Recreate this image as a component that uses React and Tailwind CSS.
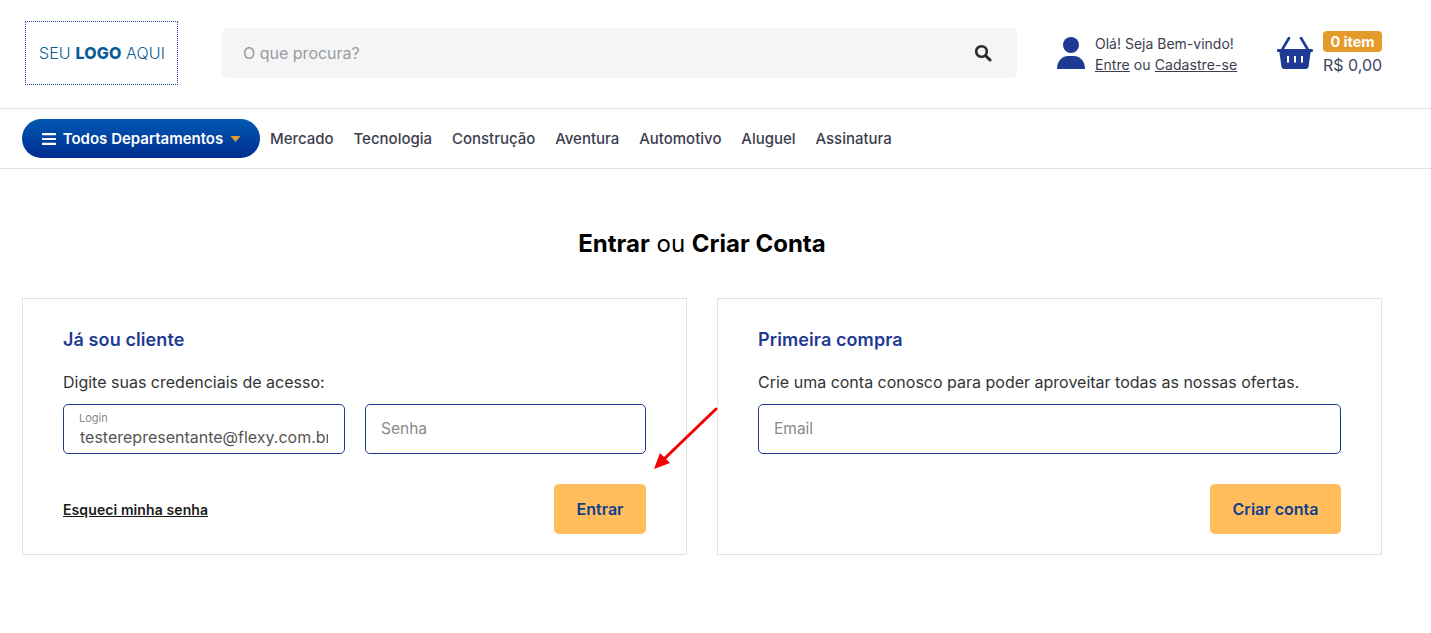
import React from "react";

const UserIcon = () => (
  <svg width="28" height="32" viewBox="0 0 28 32" className="shrink-0">
    <circle cx="14" cy="8" r="8" fill="#1f3a93" />
    <path d="M0 32 C0 23 6 19 11 19 H17 C22 19 28 23 28 32 Z" fill="#1f3a93" />
  </svg>
);

const BasketIcon = () => (
  <svg width="36" height="33" viewBox="0 0 36 33" className="shrink-0">
    <path d="M12 1 L5.5 12 M24 1 L30.5 12" stroke="#1f3a93" strokeWidth="2.6" strokeLinecap="round" />
    <path d="M1.5 12 H34.5 C35.6 12 36 12.6 36 13.4 C36 14.4 35.4 15 34.4 15 H33.6 L31.6 29.6 C31.4 31 30.4 32 29 32 H7 C5.6 32 4.6 31 4.4 29.6 L2.4 15 H1.6 C0.6 15 0 14.4 0 13.4 C0 12.6 0.4 12 1.5 12 Z" fill="#1f3a93" />
    <path d="M11 19 V25.5 M18 19 V25.5 M25 19 V25.5" stroke="#fff" strokeWidth="2" />
  </svg>
);

const nav = ["Mercado", "Tecnologia", "Construção", "Aventura", "Automotivo", "Aluguel", "Assinatura"];

export default function App() {
  return (
    <div className="relative min-h-[633px] bg-white font-['Inter','Liberation_Sans',sans-serif] text-[#3d3d4e]">
      <header className="flex h-[109px] items-start border-b border-[#e2e2e2] pl-[25px] pr-[49px]">
        <div className="mt-[21px] flex h-[64px] w-[153px] shrink-0 items-center justify-center border border-dotted border-[#2b4aa8] pl-[1px] text-base tracking-[0.15px] text-[#0b5c94]">
          <span className="font-light">SEU&nbsp;</span>
          <span className="font-extrabold">LOGO</span>
          <span className="font-light">&nbsp;AQUI</span>
        </div>
        <div className="ml-[44px] mt-[28px] flex h-[50px] w-[795px] shrink-0 items-center justify-between rounded-[5px] bg-[#f4f5f7] pl-[21px] pr-[25px]">
          <span className="text-base text-[#9b9b9b]">O que procura?</span>
          <svg width="18" height="18" viewBox="0 0 18 18" fill="none">
            <circle cx="7.5" cy="7.5" r="5.3" stroke="#2b2b2b" strokeWidth="2.6" />
            <path d="M11.5 11.5 L16 16" stroke="#2b2b2b" strokeWidth="3" strokeLinecap="round" />
          </svg>
        </div>
        <div className="ml-[40px] mt-[33px] flex shrink-0 items-start gap-[10px]">
          <div className="mt-[4px]"><UserIcon /></div>
          <div className="w-[142px] whitespace-nowrap text-sm leading-[21px]">
            <div>Olá! Seja Bem-vindo!</div>
            <div className="tracking-[0.07px]"><span className="underline">Entre</span> ou <span className="underline">Cadastre-se</span></div>
          </div>
        </div>
        <div className="ml-[40px] mt-[31px] flex shrink-0 items-start gap-[10px]">
          <div className="mt-[6px]"><BasketIcon /></div>
          <div className="flex flex-col">
            <span className="h-[21px] w-[59px] rounded-[4px] bg-[#e59b2b] text-center text-[14.5px] font-bold leading-[21px] text-white">0 item</span>
            <span className="mt-[2px] whitespace-nowrap text-base leading-[22px] text-[#3d4660]">R$ 0,00</span>
          </div>
        </div>
      </header>

      <nav className="flex h-[60px] items-start border-b border-[#e2e2e2] pl-[22px] pt-[10px]">
        <button className="flex h-[39px] w-[238px] items-center justify-center gap-[7px] rounded-full bg-gradient-to-b from-[#0459b3] to-[#002b8f] pl-[1px] pt-[2px] text-[15px] font-semibold text-white">
          <svg width="14" height="12" viewBox="0 0 14 12" fill="#fff" className="-mt-[2px]">
            <rect x="0" y="0" width="14" height="2.2" rx="0.6" />
            <rect x="0" y="4.9" width="14" height="2.2" rx="0.6" />
            <rect x="0" y="9.8" width="14" height="2.2" rx="0.6" />
          </svg>
          <span>Todos Departamentos</span>
          <svg width="11" height="6" viewBox="0 0 11 6" className="-mt-[2px]"><path d="M0.5 0 H10.5 L5.5 6 Z" fill="#e59b2b" /></svg>
        </button>
        <ul className="ml-[10px] flex h-[39px] items-center gap-[19.8px] pt-[2px] text-[15px] font-medium text-[#3d3d4e]">
          {nav.map((n) => <li key={n}>{n}</li>)}
        </ul>
      </nav>

      <h1 className="mt-[60px] w-[1382px] pl-[22px] text-center text-2xl leading-[30px] text-black">
        <b className="font-bold">Entrar</b> ou <b className="font-bold">Criar Conta</b>
      </h1>

      <main className="mt-[39px] flex gap-[30px] pl-[22px]">
        <section className="h-[257px] w-[665px] border border-[#e2e2e2] px-[40px] pt-[29px]">
          <h2 className="text-lg font-semibold leading-[24px] tracking-[0.1px] text-[#1f3a93]">Já sou cliente</h2>
          <p className="mt-[19px] text-base leading-[22px] text-[#333]">Digite suas credenciais de acesso:</p>
          <div className="mt-[11px] flex gap-[20px]">
            <div className="flex h-[50px] w-[282px] flex-col rounded-[5px] border border-[#1f3a93] px-[16px] pt-[7px]">
              <span className="-ml-px text-[11px] leading-[13px] text-[#8a8a8a]">Login</span>
              <span className="mt-[1px] overflow-hidden whitespace-nowrap text-base leading-[22px] text-[#555]">testerepresentante@flexy.com.br</span>
            </div>
            <div className="flex h-[50px] w-[281px] items-center rounded-[5px] border border-[#1f3a93] pb-[1px] pl-[15px] text-[15.5px] text-[#8a8a8a]">Senha</div>
          </div>
          <div className="mt-[30px] flex items-center justify-between">
            <a className="pt-[2px] text-sm font-semibold tracking-[0.1px] text-[#1a1a1a] underline">Esqueci minha senha</a>
            <button className="h-[50px] w-[92px] rounded-[5px] bg-[#ffbd5c] text-base font-semibold text-[#0f3f8c]">Entrar</button>
          </div>
        </section>

        <section className="h-[257px] w-[665px] border border-[#e2e2e2] px-[40px] pt-[29px]">
          <h2 className="text-lg font-semibold leading-[24px] tracking-[0.1px] text-[#1f3a93]">Primeira compra</h2>
          <p className="mt-[19px] text-base leading-[22px] text-[#333]">Crie uma conta conosco para poder aproveitar todas as nossas ofertas.</p>
          <div className="mt-[11px] flex h-[50px] w-[583px] items-center rounded-[5px] border border-[#1f3a93] pb-[1px] pl-[15px] text-[15.5px] text-[#8a8a8a]">Email</div>
          <div className="mt-[30px] flex justify-end">
            <button className="h-[50px] w-[131px] rounded-[5px] bg-[#ffbd5c] text-base font-semibold text-[#0f3f8c]">Criar conta</button>
          </div>
        </section>
      </main>

      <svg className="pointer-events-none absolute left-[650px] top-[400px]" width="72" height="74" viewBox="0 0 72 74" fill="none">
        <path d="M66 9 L12 61" stroke="#f40000" strokeWidth="3" strokeLinecap="round" />
        <path d="M4 69 L10 53 L20 63 Z" fill="#f40000" />
      </svg>
    </div>
  );
}
